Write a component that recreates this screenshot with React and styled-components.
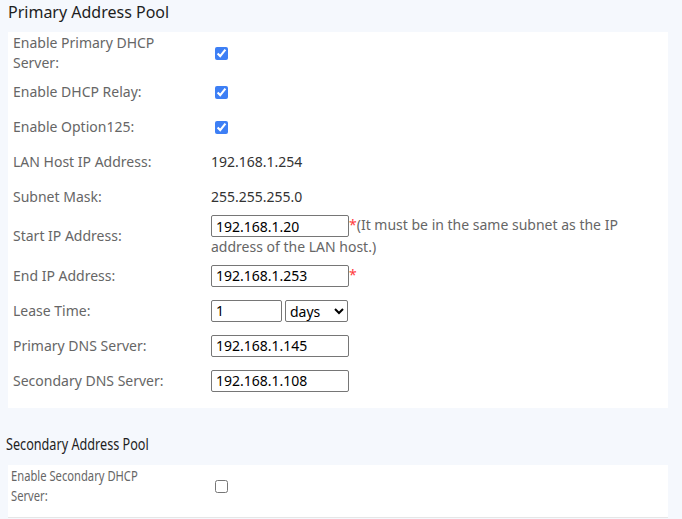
import styled, { createGlobalStyle } from 'styled-components'

const GlobalStyle = createGlobalStyle`
    body {
        margin: 0;
        background-color: #f5f8fd;
        font-family: "Noto Sans", "Liberation Sans", sans-serif;
    }
`

const Page = styled.div`
    padding: 0 14px 0 8px;
`

const SectionTitle = styled.h3`
    margin: 0;
    padding: 0 0 ${(p) => p.$gap || 8}px 0;
    font-size: 16px;
    font-weight: normal;
    line-height: 24px;
    color: #1e1e1e;
`

const Squeeze = styled.span`
    display: block;
    width: max-content;
    transform: scaleX(${(p) => p.$ratio || 0.8});
    transform-origin: left center;
    margin-left: -2px;
    white-space: nowrap;
`

const Panel = styled.div`
    background-color: #ffffff;
    padding: 0 5px 10px 5px;
    margin-bottom: 24px;
    border-bottom: ${(p) => (p.$last ? '1px solid #e6e6e6' : 'none')};
`

const Row = styled.div`
    display: grid;
    grid-template-columns: 198px 1fr;
    align-items: center;
    min-height: 33px;
    padding: 1px 0;
    font-size: 14px;
    line-height: 20px;
`

const Label = styled.div`
    color: #666666;
    padding-right: 40px;
`

const Value = styled.div`
    color: #333333;
`

const Check = styled.input.attrs({ type: 'checkbox' })`
    accent-color: #3d7ff5;
    width: 13px;
    height: 13px;
    margin: 3px 3px 3px 4px;
    vertical-align: middle;
`

const TextBox = styled.input`
    box-sizing: border-box;
    width: ${(p) => p.$width || 138}px;
    height: 22px;
    border: 1px solid #767676;
    border-radius: 2px;
    padding: 0 4px;
    font-family: "Noto Sans", "Liberation Sans", sans-serif;
    font-size: 14px;
    color: #000;
    vertical-align: top;
`

const Select = styled.select`
    box-sizing: border-box;
    width: 63px;
    height: 22px;
    margin-left: 3px;
    border: 1px solid #767676;
    border-radius: 2px;
    font-family: "Noto Sans", "Liberation Sans", sans-serif;
    font-size: 14px;
    color: #000;
    background: #fff;
    vertical-align: top;
`

const Required = styled.span`
    color: #ff3b3b;
`

const Note = styled.span`
    color: #666666;
`

const primaryRows = [
    { label: 'Enable Primary DHCP Server:', check: true },
    { label: 'Enable DHCP Relay:', check: true },
    { label: 'Enable Option125:', check: true },
    { label: 'LAN Host IP Address:', text: '192.168.1.254' },
    { label: 'Subnet Mask:', text: '255.255.255.0' },
]

const App = () => {
    return (
        <Page>
            <GlobalStyle />
            <SectionTitle>Primary Address Pool</SectionTitle>
            <Panel>
                {primaryRows.map((r) => (
                    <Row key={r.label}>
                        <Label>{r.label}</Label>
                        <Value>
                            {r.check ? <Check defaultChecked /> : r.text}
                        </Value>
                    </Row>
                ))}
                <Row>
                    <Label>Start IP Address:</Label>
                    <Value>
                        <TextBox defaultValue="192.168.1.20" />
                        <Required>*</Required>
                        <Note>(It must be in the same subnet as the IP address of the LAN host.)</Note>
                    </Value>
                </Row>
                <Row>
                    <Label>End IP Address:</Label>
                    <Value>
                        <TextBox defaultValue="192.168.1.253" />
                        <Required>*</Required>
                    </Value>
                </Row>
                <Row>
                    <Label>Lease Time:</Label>
                    <Value>
                        <TextBox $width={71} defaultValue="1" />
                        <Select defaultValue="days">
                            <option value="days">days</option>
                            <option value="hours">hours</option>
                            <option value="minutes">minutes</option>
                        </Select>
                    </Value>
                </Row>
                <Row>
                    <Label>Primary DNS Server:</Label>
                    <Value>
                        <TextBox defaultValue="192.168.1.145" />
                    </Value>
                </Row>
                <Row>
                    <Label>Secondary DNS Server:</Label>
                    <Value>
                        <TextBox defaultValue="192.168.1.108" />
                    </Value>
                </Row>
            </Panel>

            <SectionTitle $gap={9}>
                <Squeeze $ratio={0.79}>Secondary Address Pool</Squeeze>
            </SectionTitle>
            <Panel $last>
                <Row>
                    <Label>
                        <Squeeze $ratio={0.8}>Enable Secondary DHCP</Squeeze>
                        <Squeeze $ratio={0.8}>Server:</Squeeze>
                    </Label>
                    <Value>
                        <Check />
                    </Value>
                </Row>
            </Panel>
        </Page>
    )
}

export default App
